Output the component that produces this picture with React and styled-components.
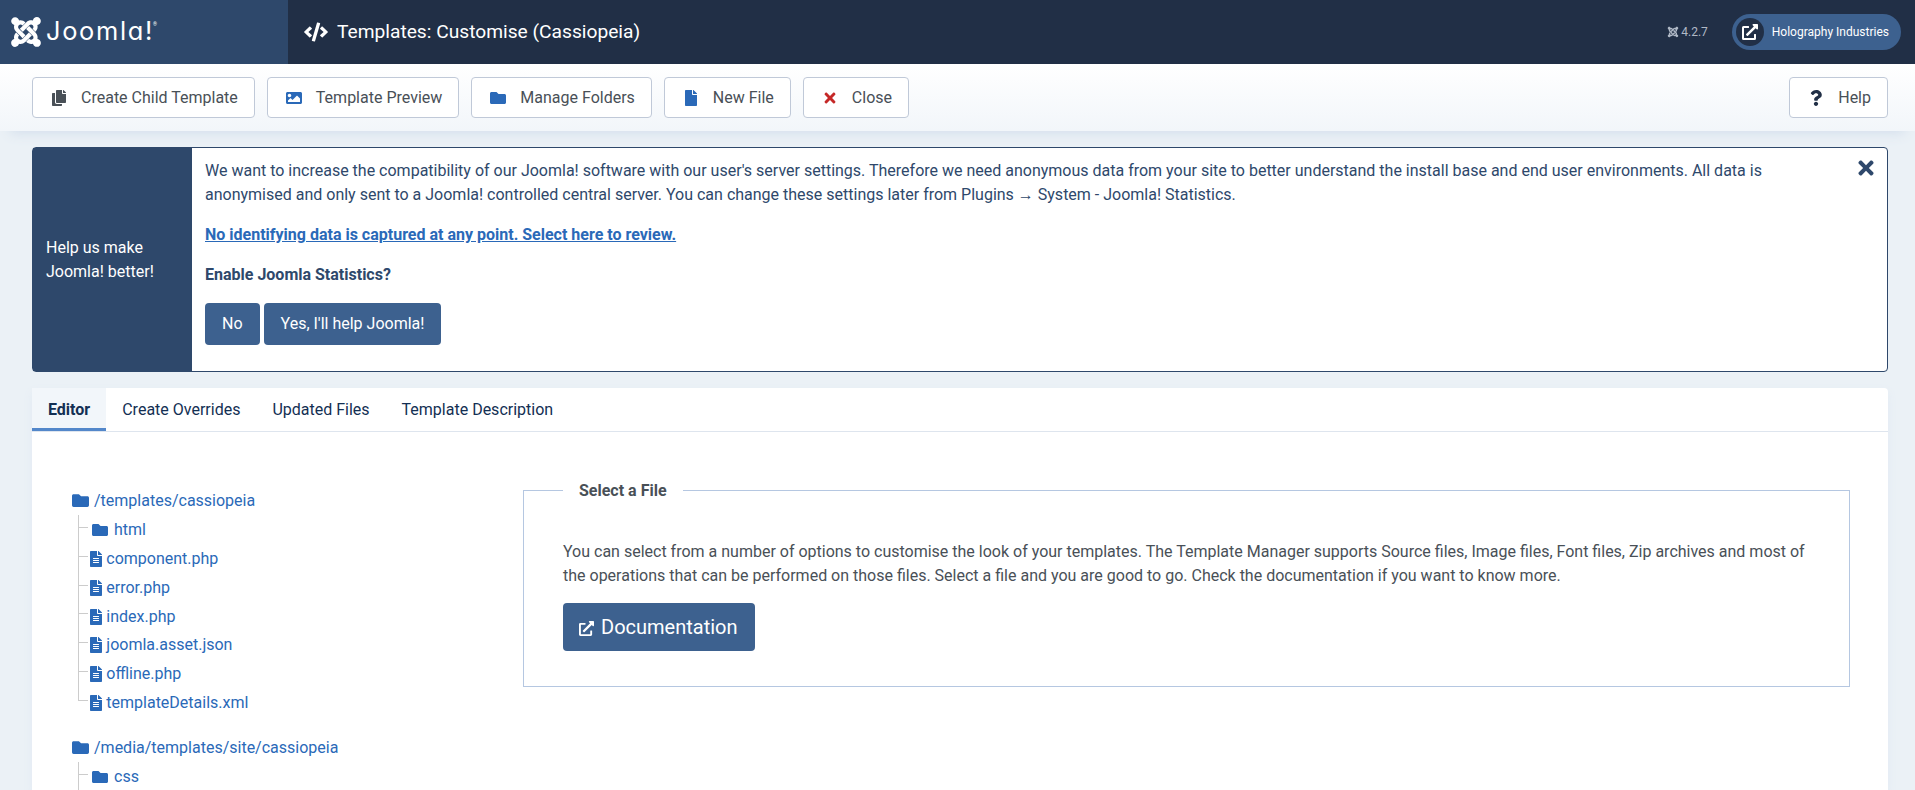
import React from "react";
import styled, { createGlobalStyle, css } from "styled-components";
import {
  FaJoomla, FaCode, FaCopy, FaImage, FaFolder, FaFile, FaTimes, FaQuestion, FaExternalLinkAlt, FaFileAlt,
} from "react-icons/fa";

const Global = createGlobalStyle`
  *, *::before, *::after { box-sizing: border-box; }
  html, body { margin: 0; }
  body { background: #ebf1f6; color: #495057; font: 400 16px/24px Roboto, sans-serif; }
  svg { display: block; flex: none; }
  p { margin: 0; }
  button { font: inherit; }
`;

const Page = styled.div`
  display: flex;
  flex-direction: column;
  height: 790px;
  overflow: hidden;
`;

const Header = styled.header`
  position: relative;
  z-index: 1;
  display: flex;
  flex: none;
  height: 64px;
  background: #212f46;
  color: #fff;
`;

const Brand = styled.div`
  display: flex;
  align-items: center;
  width: 288px;
  padding-left: 9px;
  background: #2e486b;
`;

const WordMark = styled.span`
  margin: -2px 0 0 3px;
  font: 400 25.4px/30px Inter, sans-serif;
  font-feature-settings: "cv11";
  letter-spacing: 1.7px;
`;

const Registered = styled.sup`
  align-self: flex-start;
  margin: 21px 0 0 -1px;
  font-size: 5px;
  line-height: 6px;
`;

const Title = styled.h1`
  display: flex;
  align-items: center;
  gap: 9px;
  flex: 1;
  margin: 0;
  padding-left: 16px;
  font-size: 19.2px;
  font-weight: 400;
  line-height: 24px;
`;

const Version = styled.div`
  display: flex;
  align-items: center;
  gap: 2px;
  margin-right: 24px;
  color: #b0b9c6;
  font-size: 12px;
`;

const SiteLink = styled.a`
  display: flex;
  align-items: center;
  align-self: center;
  gap: 8px;
  height: 36px;
  margin: -1px 14px 0 0;
  padding: 0 12px 0 4px;
  border-radius: 18px;
  background: #3d618f;
  font-size: 12px;
`;

const Disc = styled.span`
  display: grid;
  place-items: center;
  width: 28px;
  height: 28px;
  border-radius: 50%;
  background: #212f46;
`;

const Toolbar = styled.div`
  display: flex;
  align-items: center;
  flex: none;
  gap: 12px;
  height: 67px;
  padding: 0 27px 0 32px;
  background: linear-gradient(#fff, #f2f6fa);
  box-shadow: 0 12px 12px -10px #d3deec;
`;

const ToolButton = styled.button`
  display: flex;
  align-items: center;
  gap: 8px;
  height: 41px;
  margin-left: ${(p) => (p.$end ? "auto" : 0)};
  padding: 0 16px 0 12px;
  border: 1px solid #c0c9d8;
  border-radius: 4px;
  background: #fff;
  color: #495057;
`;

const IconCell = styled.span`
  display: grid;
  place-items: center;
  width: 28px;
  color: ${(p) => p.$color};
`;

const Content = styled.main`
  display: flex;
  flex-direction: column;
  gap: 16px;
  flex: 1;
  padding: 16px 27px 0 32px;
`;

const Notice = styled.section`
  display: flex;
  flex: none;
  height: 225px;
  border: 1px solid #2e486b;
  border-radius: 4px;
  background: #fff;
  color: #2e486b;
`;

const NoticeHeading = styled.div`
  display: flex;
  align-items: center;
  flex: none;
  width: 159px;
  padding: 0 13px;
  background: #2e486b;
  color: #fff;
`;

const NoticeBody = styled.div`
  display: flex;
  flex-direction: column;
  gap: 16px;
  flex: 1;
  padding: 11px 0 0 13px;
`;

const ReviewLink = styled.a`
  color: #2a69b8;
  font-weight: 700;
  text-decoration: underline;
`;

const NoticeActions = styled.div`
  display: flex;
  gap: 4px;
`;

const primary = css`
  border: 0;
  border-radius: 4px;
  background: #3d618f;
  color: #fff;
`;

const PrimaryButton = styled.button`
  ${primary}
  height: 42px;
  padding: 0 17px;
`;

const Dismiss = styled.span`
  flex: none;
  width: 120px;
  padding: 9px 10px 0 0;
  svg { margin-left: auto; }
`;

const Panel = styled.section`
  flex: 1;
  border-radius: 4px 4px 0 0;
  background: #fff;
  box-shadow: 0 4px 10px #e2eaf3;
`;

const Tabs = styled.nav`
  display: flex;
  height: 44px;
  border-bottom: 1px solid #dee5ee;
`;

const Tab = styled.a`
  height: 43px;
  padding: 10px 16px 0;
  color: #132f53;
  ${(p) => p.$active && css`
    background: #f2f6fa;
    border-bottom: 3px solid #5387ca;
    font-weight: 700;
  `}
`;

const Columns = styled.div`
  display: flex;
  align-items: flex-start;
  padding: 46px 38px 0 40px;
`;

const Files = styled.aside`
  flex: none;
  width: 451px;
  padding-top: 8px;
  color: #2a69b8;
`;

const Root = styled.div`
  display: flex;
  align-items: center;
  gap: 5px;
  height: 29px;
`;

const Branch = styled.ul`
  margin: 0 0 0 6px;
  padding: 0;
  list-style: none;

  & + ${Root} { margin-top: 16.4px; }
`;

const trunk = css`
  background: linear-gradient(#ccc, #ccc) 0 0 / 1px 100% no-repeat;
`;

const Leaf = styled.li`
  display: flex;
  height: 28.83px;
  ${(p) => p.$continues && trunk}

  &::before {
    content: "";
    width: 10px;
    height: 13px;
    border-left: 1px solid #ccc;
    border-bottom: 1px solid #ccc;
  }
`;

const LeafName = styled.span`
  display: flex;
  align-items: center;
  gap: ${(p) => (p.$folder ? 6 : 2)}px;
  padding: 1.4px 0 0 ${(p) => (p.$folder ? 4 : 0.3)}px;
`;

const Fieldset = styled.fieldset`
  flex: 1;
  height: 209px;
  min-width: 0;
  margin: 0;
  padding: 37px 39px 0;
  border: 1px solid #b5c7e1;
`;

const Legend = styled.legend`
  padding: 1px 16px 0;
  color: #495057;
  font-weight: 700;
`;

const DocButton = styled.a`
  ${primary}
  display: inline-flex;
  align-items: center;
  gap: 7px;
  height: 48px;
  margin-top: 15px;
  padding: 0 17px 0 16px;
  font-size: 20px;
  svg { margin-top: 2px; }
`;

const TOOLS = [
  ["Create Child Template", FaCopy, "#495057"],
  ["Template Preview", FaImage, "#2a69b8"],
  ["Manage Folders", FaFolder, "#2a69b8"],
  ["New File", FaFile, "#2a69b8"],
  ["Close", FaTimes, "#c52827"],
];

const TREE = [
  {
    root: "/templates/cassiopeia",
    entries: ["html", "component.php", "error.php", "index.php", "joomla.asset.json", "offline.php", "templateDetails.xml"],
  },
  { root: "/media/templates/site/cassiopeia", entries: ["css"], more: true },
];

function Tool({ label, icon: Icon, color, end }) {
  return (
    <ToolButton $end={end}>
      <IconCell $color={color}><Icon size={16} /></IconCell>
      {label}
    </ToolButton>
  );
}

function Entry({ name, continues }) {
  const folder = !name.includes(".");
  const Icon = folder ? FaFolder : FaFileAlt;
  return (
    <Leaf $continues={continues}>
      <LeafName $folder={folder}>
        <Icon size={16} />
        {name}
      </LeafName>
    </Leaf>
  );
}

export default function App() {
  return (
    <Page>
      <Global />
      <Header>
        <Brand>
          <FaJoomla size={34} />
          <WordMark>Joomla!</WordMark>
          <Registered>®</Registered>
        </Brand>
        <Title><FaCode size={24} />Templates: Customise (Cassiopeia)</Title>
        <Version><FaJoomla size={12} />4.2.7</Version>
        <SiteLink>
          <Disc><FaExternalLinkAlt size={16} /></Disc>
          Holography Industries
        </SiteLink>
      </Header>
      <Toolbar>
        {TOOLS.map(([label, icon, color]) => <Tool key={label} label={label} icon={icon} color={color} />)}
        <Tool label="Help" icon={FaQuestion} color="#212f46" end />
      </Toolbar>
      <Content>
        <Notice>
          <NoticeHeading>Help us make Joomla! better!</NoticeHeading>
          <NoticeBody>
            <p>
              We want to increase the compatibility of our Joomla! software with our user's server settings. Therefore we need anonymous data from your site to better understand the install base and end user environments. All data is anonymised and only sent to a Joomla! controlled central server. You can change these settings later from Plugins → System - Joomla! Statistics.
            </p>
            <p><ReviewLink>No identifying data is captured at any point. Select here to review.</ReviewLink></p>
            <p><strong>Enable Joomla Statistics?</strong></p>
            <NoticeActions>
              <PrimaryButton>No</PrimaryButton>
              <PrimaryButton>Yes, I'll help Joomla!</PrimaryButton>
            </NoticeActions>
          </NoticeBody>
          <Dismiss><FaTimes size={22} /></Dismiss>
        </Notice>
        <Panel>
          <Tabs>
            <Tab $active>Editor</Tab>
            <Tab>Create Overrides</Tab>
            <Tab>Updated Files</Tab>
            <Tab>Template Description</Tab>
          </Tabs>
          <Columns>
            <Files>
              {TREE.map(({ root, entries, more }) => (
                <React.Fragment key={root}>
                  <Root><FaFolder size={17} />{root}</Root>
                  <Branch>
                    {entries.map((name, i) => (
                      <Entry key={name} name={name} continues={more || i < entries.length - 1} />
                    ))}
                  </Branch>
                </React.Fragment>
              ))}
            </Files>
            <Fieldset>
              <Legend>Select a File</Legend>
              <p>
                You can select from a number of options to customise the look of your templates. The Template Manager supports Source files, Image files, Font files, Zip archives and most of the operations that can be performed on those files. Select a file and you are good to go. Check the documentation if you want to know more.
              </p>
              <DocButton><FaExternalLinkAlt size={15} />Documentation</DocButton>
            </Fieldset>
          </Columns>
        </Panel>
      </Content>
    </Page>
  );
}
